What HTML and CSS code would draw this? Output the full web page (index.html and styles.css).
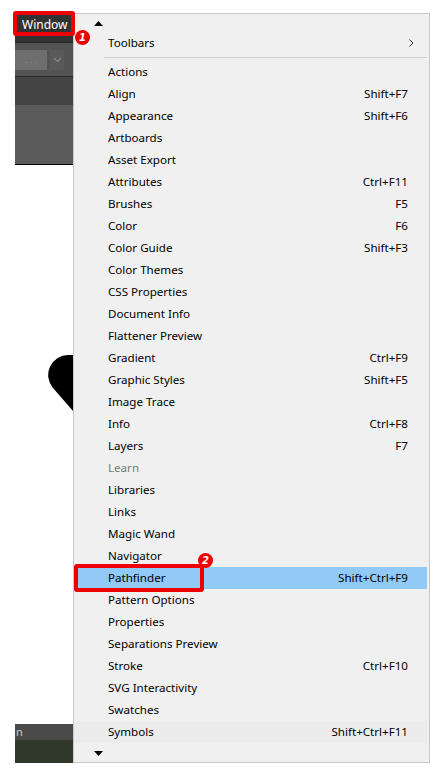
FILE: index.html
```html
<!DOCTYPE html>
<html>
<head>
<meta charset="utf-8">
<link rel="stylesheet" href="styles.css">
</head>
<body>
<div class="stage">
  <div class="app">
    <div class="titlebar"><span class="win-label">Window</span></div>
    <div class="toolbar">
      <div class="field">. . .</div>
      <div class="drop"><svg width="9" height="6" viewBox="0 0 9 6"><path d="M1 1 L4.5 4.5 L8 1" fill="none" stroke="#8a8a8a" stroke-width="1.2"/></svg></div>
    </div>
    <div class="panel-a"></div>
    <div class="panel-b"></div>
    <div class="canvas">
      <svg class="heart" width="25" height="56" viewBox="0 0 25 56"><path d="M25 0 L20 0 A20 20 0 0 0 5 33 L25 56 Z" fill="#000"/></svg>
    </div>
    <div class="strip">n</div>
    <div class="bottom"></div>
  </div>
  <div class="menu">
    <div class="scroll-arrow"><svg width="9" height="5" viewBox="0 0 9 5"><path d="M0 5 L4.5 0 L9 5 Z" fill="#000"/></svg></div>
    <div class="item"><span>Toolbars</span><svg class="chev" width="5" height="8" viewBox="0 0 5 8"><path d="M0.5 0.5 L4 4 L0.5 7.5" fill="none" stroke="#333" stroke-width="1"/></svg></div>
    <div class="sep"></div>
    <div class="item"><span>Actions</span></div>
    <div class="item"><span>Align</span><span class="key">Shift+F7</span></div>
    <div class="item"><span>Appearance</span><span class="key">Shift+F6</span></div>
    <div class="item"><span>Artboards</span></div>
    <div class="item"><span>Asset Export</span></div>
    <div class="item"><span>Attributes</span><span class="key">Ctrl+F11</span></div>
    <div class="item"><span>Brushes</span><span class="key">F5</span></div>
    <div class="item"><span>Color</span><span class="key">F6</span></div>
    <div class="item"><span>Color Guide</span><span class="key">Shift+F3</span></div>
    <div class="item"><span>Color Themes</span></div>
    <div class="item"><span>CSS Properties</span></div>
    <div class="item"><span>Document Info</span></div>
    <div class="item"><span>Flattener Preview</span></div>
    <div class="item"><span>Gradient</span><span class="key">Ctrl+F9</span></div>
    <div class="item"><span>Graphic Styles</span><span class="key">Shift+F5</span></div>
    <div class="item"><span>Image Trace</span></div>
    <div class="item"><span>Info</span><span class="key">Ctrl+F8</span></div>
    <div class="item"><span>Layers</span><span class="key">F7</span></div>
    <div class="item disabled"><span>Learn</span></div>
    <div class="item"><span>Libraries</span></div>
    <div class="item"><span>Links</span></div>
    <div class="item"><span>Magic Wand</span></div>
    <div class="item"><span>Navigator</span></div>
    <div class="item active"><span>Pathfinder</span><span class="key">Shift+Ctrl+F9</span></div>
    <div class="item"><span>Pattern Options</span></div>
    <div class="item"><span>Properties</span></div>
    <div class="item"><span>Separations Preview</span></div>
    <div class="item"><span>Stroke</span><span class="key">Ctrl+F10</span></div>
    <div class="item"><span>SVG Interactivity</span></div>
    <div class="item"><span>Swatches</span></div>
    <div class="item last"><span>Symbols</span><span class="key">Shift+Ctrl+F11</span></div>
    <div class="scroll-arrow down"><svg width="9" height="5" viewBox="0 0 9 5"><path d="M0 0 L4.5 5 L9 0 Z" fill="#000"/></svg></div>
  </div>
  <div class="mark mark-window"></div>
  <div class="badge badge-1">1</div>
  <div class="mark mark-path"></div>
  <div class="badge badge-2">2</div>
</div>
</body>
</html>
```

FILE: styles.css
```css
html, body {
  margin: 0;
  padding: 0;
  background: #fff;
}
body {
  font-family: "Noto Sans", "Liberation Sans", sans-serif;
  font-size: 11.6px;
  color: #000;
}
.stage {
  position: relative;
  display: flex;
  padding: 13px 0 0 15px;
  width: 438px;
  height: 771px;
  box-sizing: border-box;
}
.app {
  width: 58px;
  height: 750px;
  display: flex;
  flex-direction: column;
  overflow: hidden;
}
.titlebar {
  height: 30px;
  background: #323232;
  border-bottom: 1px solid #262626;
  display: flex;
  align-items: flex-start;
  padding: 4px 0 0 7px;
  box-sizing: border-box;
}
.win-label {
  color: #fff;
  font-size: 12px;
  line-height: 16px;
  white-space: nowrap;
}
.toolbar {
  height: 34px;
  background: #535353;
  border-bottom: 1px solid #2b2b2b;
  display: flex;
  align-items: center;
  gap: 3px;
  box-sizing: border-box;
}
.field {
  width: 32px;
  height: 20px;
  background: #6e6e6e;
  color: #8f8f8f;
  font-size: 9px;
  line-height: 20px;
  text-align: center;
}
.drop {
  width: 14px;
  height: 20px;
  background: #5a5a5a;
  display: flex;
  align-items: center;
  justify-content: center;
}
.panel-a {
  height: 28px;
  background: #444;
}
.panel-b {
  height: 60px;
  background: #5b5b5b;
  border-bottom: 1px solid #000;
  box-sizing: border-box;
}
.canvas {
  flex: 1;
  background: #fff;
  padding-top: 190px;
  padding-left: 33px;
}
.heart { display: block; }
.strip {
  height: 16px;
  background: #4a4a4a;
  color: #ccc;
  font-size: 11px;
  line-height: 16px;
  padding-left: 1px;
}
.bottom {
  height: 23px;
  background: #2f3829;
}
.menu {
  width: 357px;
  height: 750px;
  box-sizing: border-box;
  background: #f0f0f0;
  border: 1px solid #c8c8c8;
  display: flex;
  flex-direction: column;
}
.scroll-arrow {
  height: 18px;
  padding-left: 20px;
  display: flex;
  align-items: center;
}
.scroll-arrow.down {
  height: 18px;
  padding-top: 2px;
  box-sizing: border-box;
}
.item {
  height: 22px;
  display: flex;
  align-items: center;
  justify-content: space-between;
  padding: 0 19px 1px 34px;
  box-sizing: border-box;
  margin-right: 2px;
  white-space: nowrap;
}
.item.last { background: #ececec; }
.item.disabled { color: #6f8273; }
.item.active { background: #91c9f7; }
.chev {
  margin-right: -6px;
}
.sep {
  height: 7px;
  display: flex;
  align-items: center;
  margin: 0 2px 0 30px;
}
.sep::before {
  content: "";
  flex: 1;
  height: 1px;
  background: #d2d2d2;
}
.mark {
  position: absolute;
  border: 4px solid #ee0000;
  border-radius: 3px;
  box-sizing: border-box;
}
.mark-window {
  left: 13px;
  top: 11px;
  width: 62px;
  height: 25px;
}
.mark-path {
  left: 74px;
  top: 564px;
  width: 130px;
  height: 28px;
}
.badge {
  position: absolute;
  width: 15px;
  height: 15px;
  border-radius: 50%;
  background: #ee0000;
  color: #fff;
  font-family: "DejaVu Sans", sans-serif;
  font-weight: bold;
  font-style: italic;
  font-size: 10px;
  line-height: 15px;
  text-align: center;
}
.badge-1 {
  left: 75px;
  top: 30px;
}
.badge-2 {
  left: 198px;
  top: 553px;
}
```
